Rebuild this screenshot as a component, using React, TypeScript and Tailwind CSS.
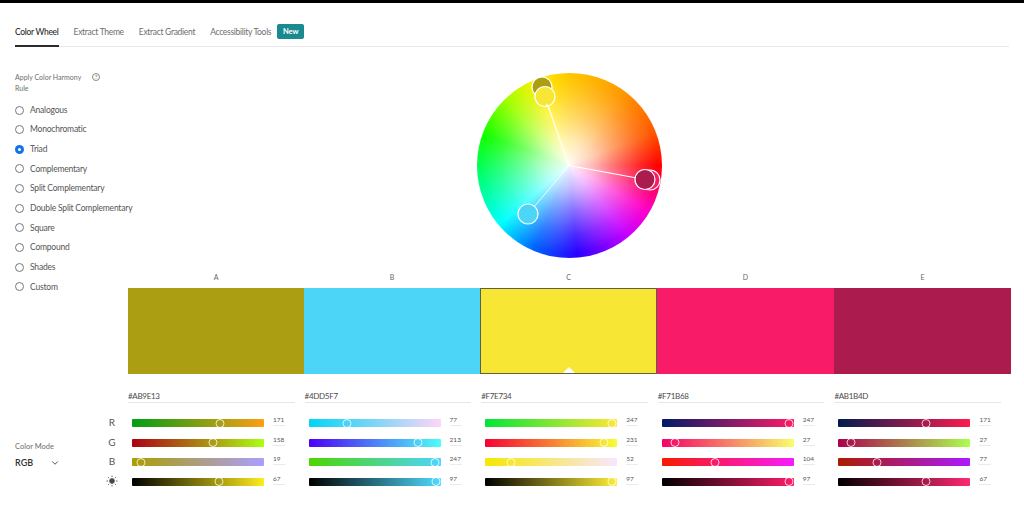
import { ChevronDown } from 'lucide-react';

type Rgb = [number, number, number];

const HARMONY_RULES = [
  'Analogous',
  'Monochromatic',
  'Triad',
  'Complementary',
  'Split Complementary',
  'Double Split Complementary',
  'Square',
  'Compound',
  'Shades',
  'Custom',
];

const SWATCHES: { label: string; hex: string; rgb: Rgb; brightness: number }[] = [
  { label: 'A', hex: '#AB9E13', rgb: [171, 158, 19], brightness: 67 },
  { label: 'B', hex: '#4DD5F7', rgb: [77, 213, 247], brightness: 97 },
  { label: 'C', hex: '#F7E734', rgb: [247, 231, 52], brightness: 97 },
  { label: 'D', hex: '#F71B68', rgb: [247, 27, 104], brightness: 97 },
  { label: 'E', hex: '#AB1B4D', rgb: [171, 27, 77], brightness: 67 },
];

const css = (c: number[]) => `rgb(${c.map(v => Math.min(255, Math.round(v))).join(',')})`;

const SunIcon = () => (
  <svg viewBox="0 0 12 12" className="h-[12px] w-[12px]" fill="none" stroke="#555" strokeWidth="0.9">
    <circle cx="6" cy="6" r="2.4" fill="#444" />
    <path d="M6 0.5v1.6M6 9.9v1.6M0.5 6h1.6M9.9 6h1.6M2.1 2.1l1.1 1.1M8.8 8.8l1.1 1.1M2.1 9.9l1.1-1.1M8.8 3.2l1.1-1.1" />
  </svg>
);

const Slider = ({ from, to, value, max }: { from: number[]; to: number[]; value: number; max: number }) => (
  <div className="flex h-[8px] items-center">
    <div
      className="relative h-[8px] w-[132px] rounded-[1px]"
      style={{ background: `linear-gradient(to right, ${css(from)}, ${css(to)})` }}
    >
      <div
        className="absolute top-[-0.5px] h-[9px] w-[9px] -translate-x-1/2 rounded-full border border-white/80"
        style={{ left: Math.min(127, Math.max(5, (value / max) * 132 - 1)) }}
      />
    </div>
    <div className="ml-[9px] w-[12px] -translate-y-[2px] border-b border-[#eaeaea] pb-[1px] text-[6.5px] leading-[8px] text-[#555]">
      {value}
    </div>
  </div>
);

const ColorSliders = ({ swatch }: { swatch: (typeof SWATCHES)[number] }) => {
  const [r, g, b] = swatch.rgb;
  const full = swatch.rgb.map(v => (v * 100) / swatch.brightness);
  return (
    <div className="w-[166.6px]">
      <div className="h-[16px] border-b border-[#e6e6e6] pt-[3px] text-[8px] leading-[13px] tracking-[-0.3px] text-[#4b4b4b]">
        {swatch.hex}
      </div>
      <div className="flex flex-col gap-[11.67px] pl-[4px] pt-[16px]">
        <Slider from={[0, g, b]} to={[255, g, b]} value={r} max={255} />
        <Slider from={[r, 0, b]} to={[r, 255, b]} value={g} max={255} />
        <Slider from={[r, g, 0]} to={[r, g, 255]} value={b} max={255} />
        <Slider from={[0, 0, 0]} to={full} value={swatch.brightness} max={100} />
      </div>
    </div>
  );
};

const ColorWheel = () => (
  <div className="relative h-[185px] w-[185px]">
    <div className="absolute inset-0 rounded-full bg-[conic-gradient(from_0deg,#ffc800_0deg,#ff9a00_35deg,#ff5a00_68deg,#ff0000_90deg,#ff00c8_120deg,#c800ff_140deg,#2800ff_175deg,#0064ff_203deg,#00ffff_230deg,#00ff78_262deg,#14ff00_290deg,#a0ff00_316deg,#fff000_338deg,#ffc800_360deg)]" />
    <div className="absolute inset-0 rounded-full bg-[radial-gradient(circle_closest-side,rgba(255,255,255,0.95)_0%,rgba(255,255,255,0.72)_25%,rgba(255,255,255,0.42)_50%,rgba(255,255,255,0.16)_75%,rgba(255,255,255,0)_95%)]" />
    <svg viewBox="0 0 185 185" className="absolute inset-0 overflow-visible">
      <g stroke="#fff" fill="none">
        <path d="M92 92.5L68 24" strokeWidth="1.2" />
        <path d="M92 92.5L168 106.5" strokeWidth="1.2" />
        <path d="M92 92.5L51 141" strokeWidth="0.8" />
      </g>
      <g stroke="#fff" strokeWidth="1.2">
        <circle cx="173" cy="107" r="10" fill="#f71b68" />
        <circle cx="168" cy="106.5" r="10" fill="#ab1b4d" />
        <circle cx="65" cy="14" r="10" fill="#ab9e13" />
        <circle cx="68" cy="23.5" r="10" fill="#f7e734" />
        <circle cx="51" cy="141" r="10" fill="#4dd5f7" />
      </g>
      <path d="M70 30.5l-2 3.5h4z" fill="#fff" />
    </svg>
  </div>
);

export default function App() {
  return (
    <div className="flex h-[511px] w-[1024px] flex-col overflow-hidden border-t-[3px] border-black bg-white font-['Lato','Noto_Sans',sans-serif]">
      <div className="mx-[15px] mt-[19px] flex h-[25px] items-start gap-[15px] border-b border-[#e8e8e8] text-[8.5px] leading-[20px] tracking-[-0.3px] text-[#6e6e6e]">
        <div className="h-[25px] border-b-2 border-[#2c2c2c] font-medium text-[#2c2c2c]">Color Wheel</div>
        <div>Extract Theme</div>
        <div>Extract Gradient</div>
        <div className="flex items-start gap-[6px]">
          Accessibility Tools
          <span className="mt-[2px] flex h-[15px] w-[27px] items-center justify-center rounded-[2px] bg-[#1a8a90] text-[7.5px] font-bold tracking-normal text-white">
            New
          </span>
        </div>
      </div>

      <div className="flex flex-1">
        <div className="flex w-[104px] shrink-0 flex-col pl-[15px]">
          <div className="relative mt-[25px] w-[72px] text-[7px] leading-[11px] text-[#6e6e6e]">
            Apply Color Harmony Rule
            <span className="absolute left-[77px] top-[1px] flex h-[8px] w-[8px] items-center justify-center rounded-full border border-[#888] text-[6px] leading-none">
              ?
            </span>
          </div>
          <div className="mt-[10px] flex flex-col gap-[7.67px]">
            {HARMONY_RULES.map(rule => (
              <div
                key={rule}
                className="flex h-[12px] items-center gap-[6px] whitespace-nowrap text-[8.5px] tracking-[-0.2px] text-[#555]"
              >
                {rule === 'Triad' ? (
                  <span className="flex h-[9px] w-[9px] shrink-0 items-center justify-center rounded-full bg-[#1473e6]">
                    <span className="h-[3px] w-[3px] rounded-full bg-white" />
                  </span>
                ) : (
                  <span className="h-[9px] w-[9px] shrink-0 rounded-full border border-[#777]" />
                )}
                {rule}
              </div>
            ))}
          </div>
          <div className="mt-[148px] text-[7.5px] leading-[11px] text-[#6e6e6e]">Color Mode</div>
          <div className="mt-[5px] flex w-[45px] items-center justify-between text-[9px] font-semibold leading-[12px] text-[#333]">
            RGB
            <ChevronDown className="h-[10px] w-[10px]" strokeWidth={2} />
          </div>
        </div>

        <div className="flex w-[907px] flex-col">
          <div className="ml-[24px] flex h-[188px] w-[883px] justify-center pt-[26px]">
            <ColorWheel />
          </div>
          <div className="ml-[24px] mt-[36px] grid grid-cols-[176px_176px_177px_177px_177px]">
            {SWATCHES.map(s => (
              <div key={s.label} className="relative">
                <div className="h-[12px] text-center text-[7px] leading-[12px] text-[#666]">{s.label}</div>
                <div
                  className={`mt-[5px] h-[86px] ${s.label === 'C' ? 'border border-[#5f5f45]' : ''}`}
                  style={{ backgroundColor: s.hex }}
                />
                {s.label === 'C' && (
                  <div className="absolute bottom-[1px] left-1/2 h-0 w-0 -translate-x-1/2 border-x-[6px] border-b-[6px] border-x-transparent border-b-white" />
                )}
              </div>
            ))}
          </div>
          <div className="mt-[13px] flex">
            <div className="flex w-[24px] flex-col items-center gap-[6.67px] pt-[29px] text-[10px] leading-[13px] text-[#555]">
              <span className="-ml-[8px]">R</span>
              <span className="-ml-[8px]">G</span>
              <span className="-ml-[8px]">B</span>
              <span className="-ml-[8px] flex h-[13px] items-center"><SunIcon /></span>
            </div>
            <div className="flex gap-[10px]">
              {SWATCHES.map(s => (
                <ColorSliders key={s.label} swatch={s} />
              ))}
            </div>
          </div>
        </div>
      </div>
    </div>
  );
}
